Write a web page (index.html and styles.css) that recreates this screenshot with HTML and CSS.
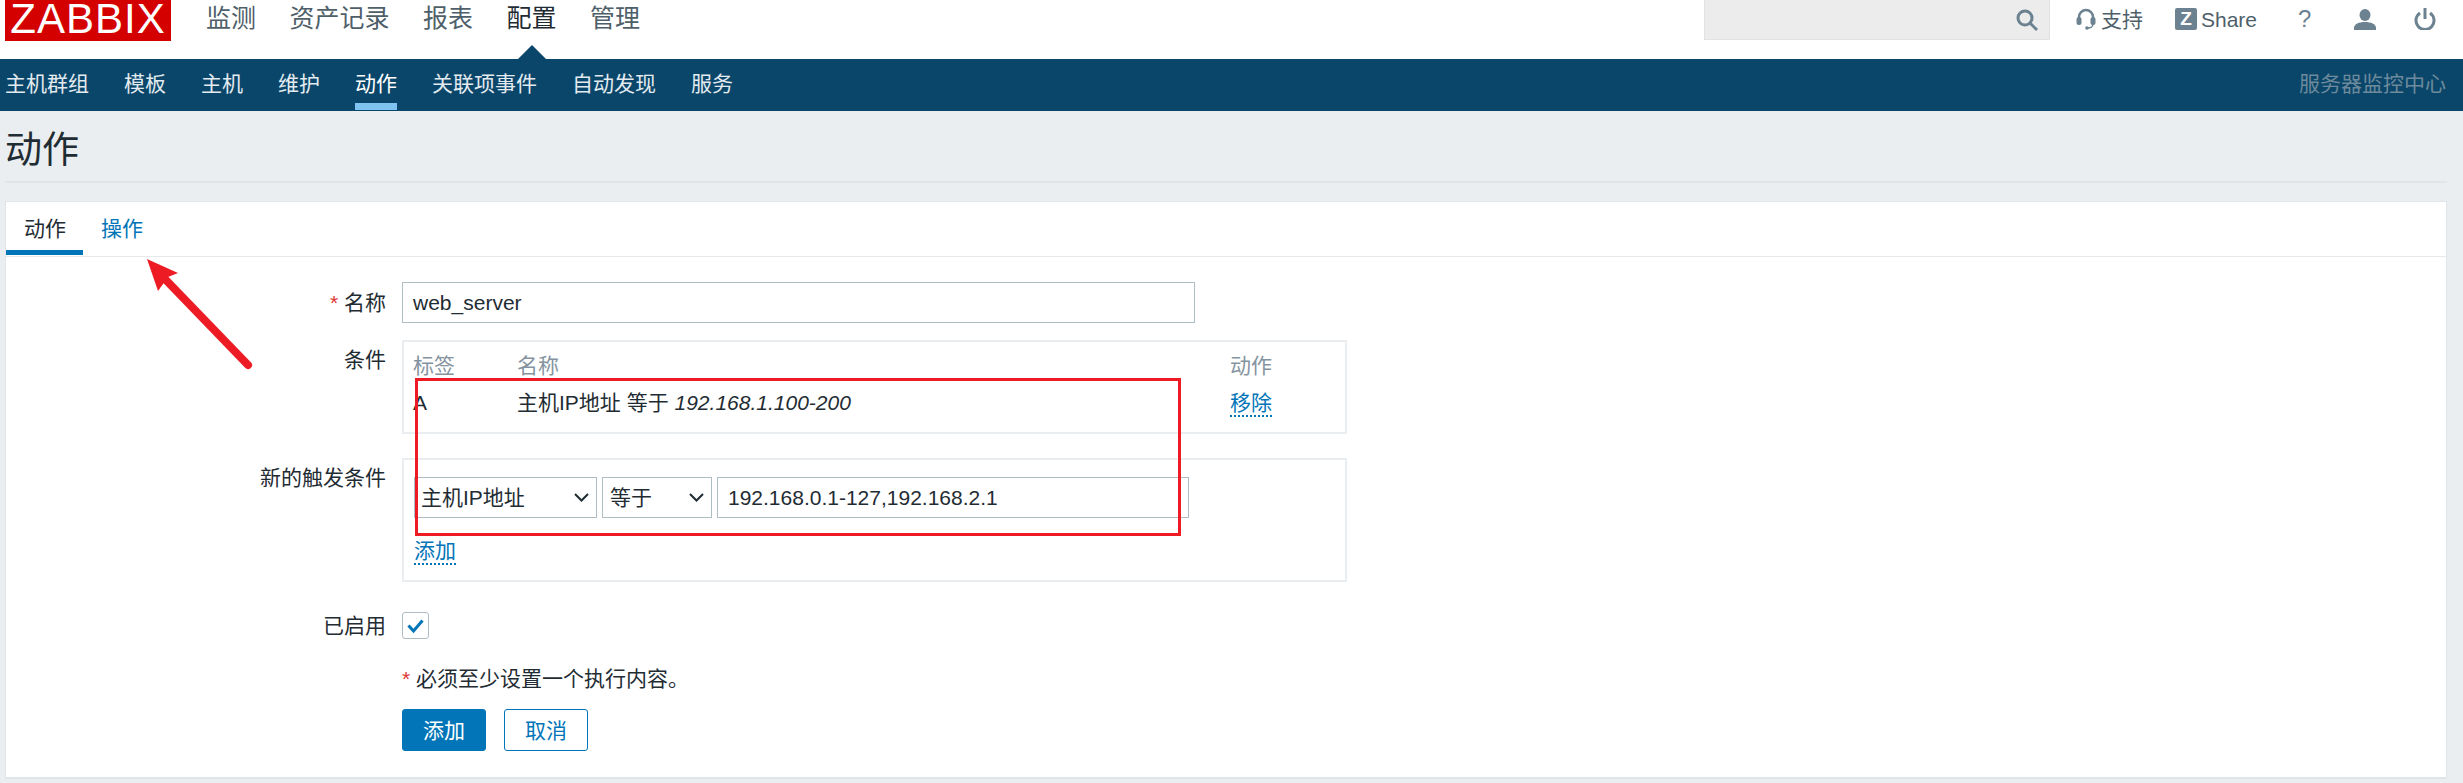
FILE: index.html
```html
<!DOCTYPE html>
<html lang="zh-CN">
<head>
<meta charset="utf-8">
<title>动作</title>
<link rel="stylesheet" href="styles.css">
</head>
<body>
<header class="top">
  <a class="logo">ZABBIX</a>
  <nav class="main-nav">
    <a>监测</a><a>资产记录</a><a>报表</a><a class="on">配置</a><a>管理</a>
  </nav>
  <div class="top-right">
    <div class="search">
      <svg class="ico" width="24" height="24" viewBox="0 0 24 24"><circle cx="10" cy="10" r="7" fill="none" stroke="#6c8290" stroke-width="3"/><path d="M15 15l7 7" stroke="#6c8290" stroke-width="3"/></svg>
    </div>
    <a class="tool support">
      <svg width="20" height="22" viewBox="0 0 20 22"><path d="M3 12V9a7 7 0 0 1 14 0v3" fill="none" stroke="#6c8290" stroke-width="2.500"/><rect x="0.500" y="9" width="5" height="8" rx="2.500" fill="#6c8290"/><rect x="14.500" y="9" width="5" height="8" rx="2.500" fill="#6c8290"/><path d="M17 16c0 3-3 4-5 4" fill="none" stroke="#6c8290" stroke-width="1.500"/><circle cx="11" cy="20" r="1.800" fill="#6c8290"/></svg>
      <span>支持</span>
    </a>
    <a class="tool share"><span class="zbox">Z</span><span>Share</span></a>
    <a class="tool help">?</a>
    <a class="tool user"><svg width="22" height="21" viewBox="0 0 22 21"><ellipse cx="11" cy="6" rx="5.500" ry="6" fill="#6c8290"/><path d="M0 21v-2c0-4 5-6 11-6s11 2 11 6v2z" fill="#6c8290"/></svg></a>
    <a class="tool power"><svg width="22" height="22" viewBox="0 0 22 22"><path d="M6 5a9 9 0 1 0 10 0" fill="none" stroke="#6c8290" stroke-width="3"/><path d="M11 0v11" stroke="#6c8290" stroke-width="3"/></svg></a>
  </div>
</header>

<nav class="sub-nav">
  <a>主机群组</a><a>模板</a><a>主机</a><a>维护</a><a class="on">动作</a><a>关联项事件</a><a>自动发现</a><a>服务</a>
  <span class="server">服务器监控中心</span>
</nav>

<main class="page">
  <h1 class="title">动作</h1>
  <section class="card">
    <div class="tabs">
      <a class="tab on">动作</a><a class="tab">操作</a>
    </div>
    <form class="form">
      <label class="lbl lbl-name"><i class="req">*</i> 名称</label>
      <div class="text-input name-input">web_server</div>

      <label class="lbl lbl-cond">条件</label>
      <div class="box cond-box">
        <table class="cond">
          <thead><tr><th class="c1">标签</th><th class="c2">名称</th><th class="c3">动作</th></tr></thead>
          <tbody><tr><td>A</td><td>主机IP地址 等于 <em>192.168.1.100-200</em></td><td><a class="dotted">移除</a></td></tr></tbody>
        </table>
      </div>

      <label class="lbl lbl-new">新的触发条件</label>
      <div class="box new-box">
        <div class="row">
          <div class="select sel1">主机IP地址<svg width="15" height="9" viewBox="0 0 15 9"><path d="M1 1l6.500 6.500L14 1" fill="none" stroke="#1f2c33" stroke-width="2"/></svg></div>
          <div class="select sel2">等于<svg width="15" height="9" viewBox="0 0 15 9"><path d="M1 1l6.500 6.500L14 1" fill="none" stroke="#1f2c33" stroke-width="2"/></svg></div>
          <div class="text-input val-input">192.168.0.1-127,192.168.2.1</div>
        </div>
        <a class="dotted add-link">添加</a>
      </div>

      <label class="lbl lbl-on">已启用</label>
      <div class="check"><svg width="17" height="14" viewBox="0 0 17 14"><path d="M1.500 6.500l5 5.500L15.500 1.500" fill="none" stroke="#0275b8" stroke-width="3"/></svg></div>

      <p class="note"><i class="req">*</i> 必须至少设置一个执行内容。</p>
      <div class="buttons"><button type="button" class="btn primary">添加</button><button type="button" class="btn">取消</button></div>
    </form>
  </section>
</main>

<div class="mark-rect"></div>
<svg class="mark-arrow" width="130" height="130" viewBox="0 0 130 130"><path d="M118 115L34 28" stroke="#ed1c24" stroke-width="8" stroke-linecap="round"/><path d="M17 9l31 14-10 4-10 14z" fill="#ed1c24"/></svg>
</body>
</html>
```
FILE: styles.css
```css
* { box-sizing: border-box; }
html, body { margin: 0; height: 783px; overflow: hidden; }
body {
  position: relative;
  background: #ebeef0;
  color: #1f2c33;
  font: 21px/1 "Liberation Sans", "Noto Sans CJK SC", sans-serif;
}
i { font-style: normal; }

.top { height: 59px; background: #fff; display: flex; align-items: flex-start; padding-left: 5px; }
.logo {
  width: 166px; height: 41px; background: #d40000; color: #fff;
  font-size: 42px; line-height: 38px; text-align: center; letter-spacing: 1px;
}
.main-nav { display: flex; gap: 33.500px; margin-left: 35px; font-size: 25px; line-height: 36px; color: #4f5f6a; }
.main-nav .on { color: #1f2c33; position: relative; }
.main-nav .on::after {
  content: ""; position: absolute; left: 11px; top: 45px;
  border: solid transparent; border-width: 0 14px 14px; border-bottom-color: #0a466a;
}
.top-right { margin-left: auto; display: flex; align-items: flex-start; }
.search {
  width: 346px; height: 40px; background: #ececec; border: 1px solid #e2e2e2; border-top: 0;
  display: flex; justify-content: flex-end; padding: 8px 10px 0 0;
}
.tool { display: flex; align-items: center; height: 38px; color: #4f5f6a; }
.support { margin-left: 26px; gap: 5px; }
.share { margin-left: 32px; gap: 4px; }
.zbox {
  width: 22px; height: 22px; background: #6c8290; color: #fff; border-radius: 2px;
  font-weight: 700; font-size: 19px; line-height: 22px; text-align: center;
}
.help { margin-left: 41px; color: #6c8290; font-size: 24px; width: 14px; }
.user { margin-left: 42px; }
.power { margin-left: 38px; margin-right: 27px; }

.sub-nav {
  height: 52px; background: #0a466a; display: flex; align-items: flex-start;
  padding-left: 5px; gap: 35px; color: #e3ebf0; line-height: 50px;
}
.sub-nav a { position: relative; height: 51px; }
.sub-nav .on { color: #fff; }
.sub-nav .on::after { content: ""; position: absolute; left: 0; right: 0; top: 44px; height: 7px; background: #7fc4f0; }
.server { margin-left: auto; padding-right: 17px; color: #6c8a9c; }

.page { padding: 0 16px 0 5px; }
.title {
  margin: 0; height: 72px; font-weight: 400; font-size: 37px; line-height: 79px;
  border-bottom: 2px solid #e1e5e8; color: #1f2c33;
}
.card {
  margin-top: 18px; height: 578px; background: #fff;
  border: 1px solid #e1e5e8; border-bottom-width: 2px;
}
.tabs { display: flex; height: 55px; border-bottom: 1px solid #e6e9ec; }
.tab {
  width: 77px; height: 53px; padding: 0 18px; line-height: 54px; color: #0275b8;
  white-space: nowrap;
}
.tab.on { color: #1f2c33; border-bottom: 5px solid #0275b8; }

.form {
  display: grid; grid-template-columns: 380px 945px;
  column-gap: 16px; padding-top: 25px; align-items: start; justify-content: start;
}
.lbl { text-align: right; line-height: 41px; white-space: nowrap; }
.req { color: #e33734; font-size: 21px; }
.text-input {
  height: 41px; border: 1px solid #aebcc4; padding-left: 10px; line-height: 40px; background: #fff;
}
.name-input { width: 793px; grid-column: 2; grid-row: 1; }
.lbl-name { grid-row: 1; }
.box { border: 2px solid #ebeef0; grid-column: 2; width: 945px; }
.lbl-cond { margin-top: 17px; grid-row: 2; line-height: 40px; }
.cond-box { margin-top: 17px; height: 94px; grid-row: 2; padding: 0 9px; }
.cond { border-collapse: collapse; width: 100%; table-layout: fixed; }
.cond th { font-weight: 400; color: #8593a0; text-align: left; height: 46px; padding: 0; }
.cond td { padding: 0; height: 30px; line-height: 30px; vertical-align: top; }
.c1 { width: 104px; }
.c3 { width: 106px; }
.dotted { color: #0275b8; border-bottom: 2px dotted #0275b8; display: inline-block; line-height: 30px; height: 29px; }
em { font-style: italic; }

.lbl-new { margin-top: 24px; grid-row: 3; line-height: 40px; }
.new-box { margin-top: 24px; height: 124px; grid-row: 3; padding: 17px 0 0 10px; }
.row { display: flex; gap: 5px; }
.select {
  height: 41px; border: 1px solid #aebcc4; background: #fff; display: flex; align-items: center;
  justify-content: space-between; padding: 0 7px 0 6px;
}
.sel1 { width: 183px; }
.sel2 { width: 110px; padding-left: 7px; }
.val-input { width: 472px; }
.add-link { margin-top: 18px; }

.lbl-on { margin-top: 30px; grid-row: 4; line-height: 28px; }
.check {
  margin-top: 30px; grid-row: 4; grid-column: 2; width: 27px; height: 27px;
  border: 1px solid #aebcc4; border-radius: 3px; display: flex; align-items: center; justify-content: center;
}
.note { grid-column: 2; margin: 27px 0 0; line-height: 24px; grid-row: 5; }
.buttons { grid-column: 2; grid-row: 6; display: flex; gap: 18px; margin-top: 18px; }
.btn {
  width: 84px; height: 42px; border: 1px solid #0275b8; border-radius: 3px; background: #fff;
  color: #0275b8; font: inherit; padding: 0;
}
.btn.primary { background: #0275b8; color: #fff; }

.mark-rect { position: absolute; left: 415px; top: 378px; width: 766px; height: 158px; border: 3px solid #ed1c24; }
.mark-arrow { position: absolute; left: 130px; top: 250px; }
```
